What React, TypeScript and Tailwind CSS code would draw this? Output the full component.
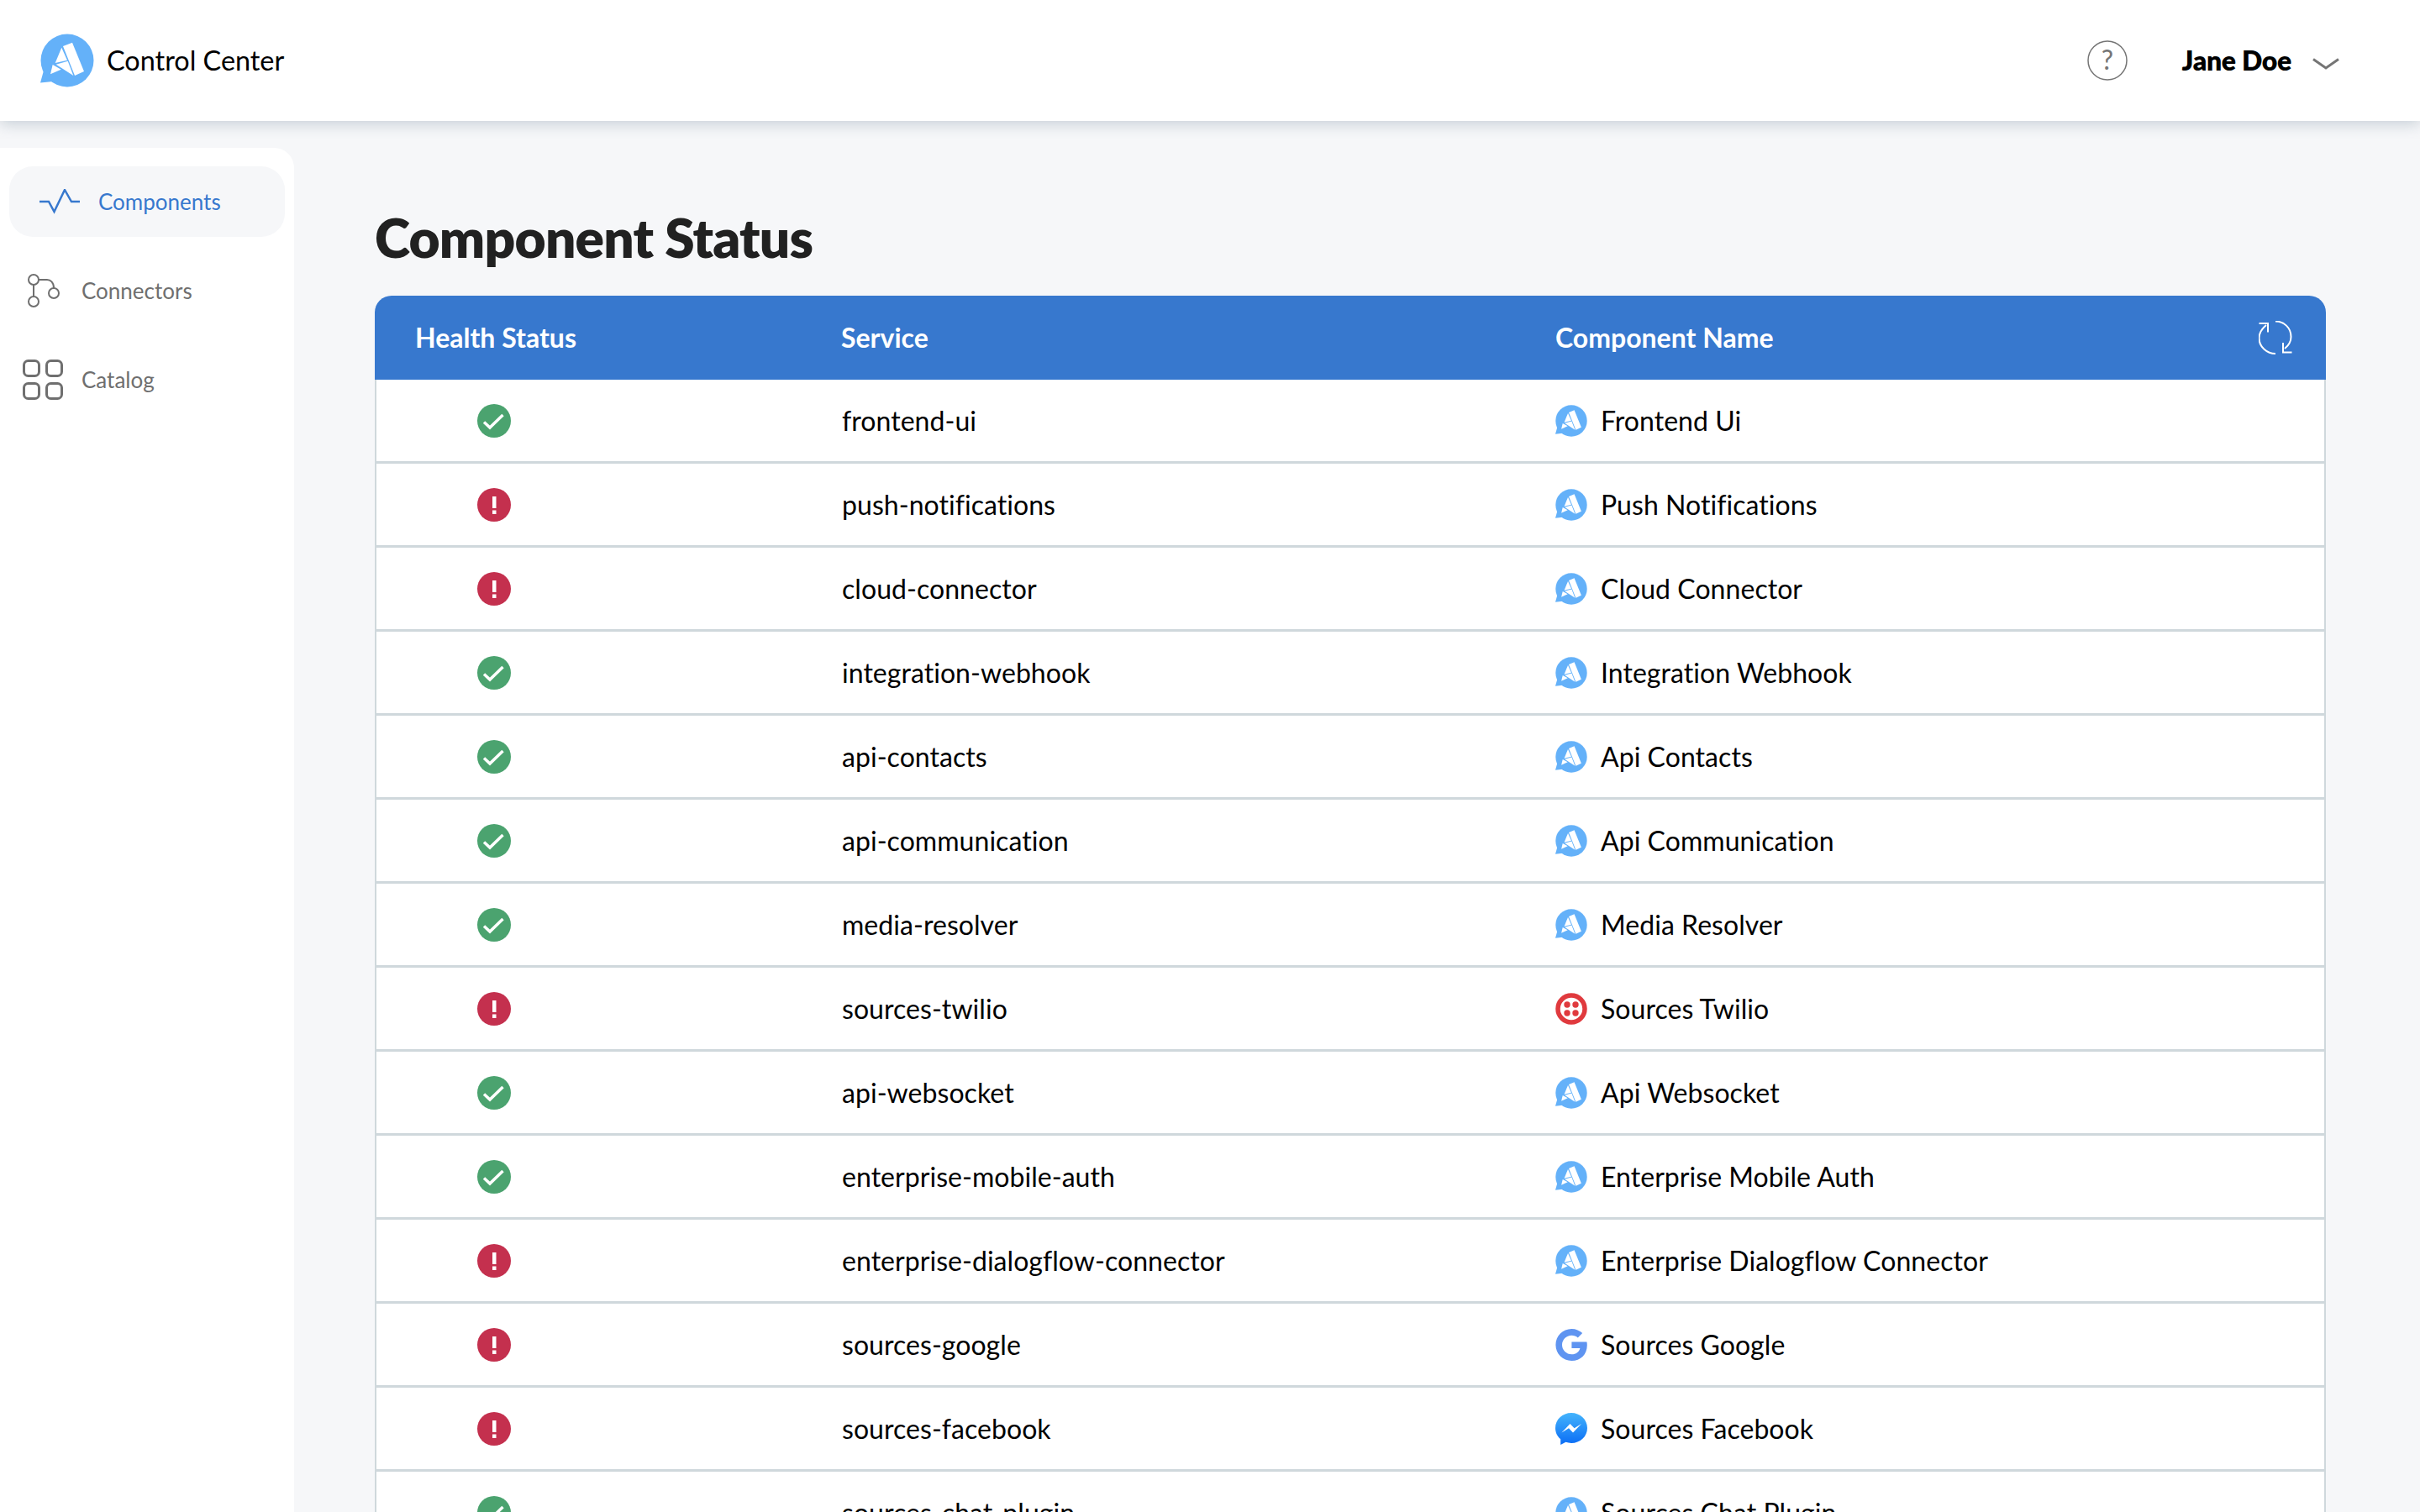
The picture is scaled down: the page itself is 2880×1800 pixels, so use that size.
import { ChevronDown } from "lucide-react";

const rows = [
  { ok: true, service: "frontend-ui", name: "Frontend Ui", icon: "app" },
  { ok: false, service: "push-notifications", name: "Push Notifications", icon: "app" },
  { ok: false, service: "cloud-connector", name: "Cloud Connector", icon: "app" },
  { ok: true, service: "integration-webhook", name: "Integration Webhook", icon: "app" },
  { ok: true, service: "api-contacts", name: "Api Contacts", icon: "app" },
  { ok: true, service: "api-communication", name: "Api Communication", icon: "app" },
  { ok: true, service: "media-resolver", name: "Media Resolver", icon: "app" },
  { ok: false, service: "sources-twilio", name: "Sources Twilio", icon: "twilio" },
  { ok: true, service: "api-websocket", name: "Api Websocket", icon: "app" },
  { ok: true, service: "enterprise-mobile-auth", name: "Enterprise Mobile Auth", icon: "app" },
  { ok: false, service: "enterprise-dialogflow-connector", name: "Enterprise Dialogflow Connector", icon: "app" },
  { ok: false, service: "sources-google", name: "Sources Google", icon: "google" },
  { ok: false, service: "sources-facebook", name: "Sources Facebook", icon: "messenger" },
  { ok: true, service: "sources-chat-plugin", name: "Sources Chat Plugin", icon: "app" },
];

function AppLogo({ className }: { className: string }) {
  return (
    <svg viewBox="0 0 64 64" className={className}>
      <circle cx="32" cy="32" r="31.5" fill="#64b1f9" />
      <path d="M4 44 L0 58.5 L15 57 Z" fill="#64b1f9" />
      <g fill="#fff">
        <path d="M27 15 L38 10.7 L52 45 L41 50 Z" />
        <path d="M25.3 16.7 L32 31.7 L17.7 35 Z" />
        <path d="M18.7 36.7 L32.7 32.7 L39.3 50 Z" />
        <path d="M14.7 37 L24.7 42.7 L12 48.3 Z" />
      </g>
    </svg>
  );
}

function TwilioLogo() {
  return (
    <svg viewBox="0 0 38 38" className="w-[38px] h-[38px]">
      <circle cx="19" cy="19" r="16" fill="none" stroke="#e03a3e" strokeWidth="5.5" />
      <circle cx="14" cy="14" r="3.7" fill="#e03a3e" />
      <circle cx="24" cy="14" r="3.7" fill="#e03a3e" />
      <circle cx="14" cy="24" r="3.7" fill="#e03a3e" />
      <circle cx="24" cy="24" r="3.7" fill="#e03a3e" />
    </svg>
  );
}

function GoogleLogo() {
  return (
    <svg viewBox="0 0 38 38" className="w-[38px] h-[38px]">
      <path
        d="M19.4 15.6 V23 H29.4 C28.4 27.4 24.6 30.3 19.4 30.3 C13.1 30.3 8 25.2 8 19 C8 12.8 13.1 7.7 19.4 7.7 C22.3 7.7 24.8 8.7 26.8 10.5 L32.2 5.1 C28.8 2 24.4 0 19.4 0 C8.9 0 0.4 8.5 0.4 19 C0.4 29.5 8.9 38 19.4 38 C29.9 38 37.8 30.6 37.8 19.2 C37.8 17.9 37.7 16.7 37.4 15.6 Z"
        fill="#5f94f1"
      />
    </svg>
  );
}

function MessengerLogo() {
  return (
    <svg viewBox="0 0 38 38" className="w-[38px] h-[38px]">
      <defs>
        <linearGradient id="fb" x1="0" y1="0" x2="0" y2="1">
          <stop offset="0" stopColor="#44b4fc" />
          <stop offset="1" stopColor="#0a6cf5" />
        </linearGradient>
      </defs>
      <path d="M19 0 C8.5 0 0 7.9 0 18 C0 23.3 2.3 28 6.2 31.2 V38 L12.4 34.8 C14.5 35.5 16.7 36 19 36 C29.5 36 38 28.1 38 18 C38 7.9 29.5 0 19 0 Z" fill="url(#fb)" />
      <path d="M7.5 23.5 L17.5 13 L22.6 18.2 L31 13 L21 23.6 L16 18.3 Z" fill="#fff" />
    </svg>
  );
}

function ComponentIcon({ icon }: { icon: string }) {
  if (icon === "twilio") return <TwilioLogo />;
  if (icon === "google") return <GoogleLogo />;
  if (icon === "messenger") return <MessengerLogo />;
  return <AppLogo className="w-[38px] h-[38px]" />;
}

function StatusIcon({ ok }: { ok: boolean }) {
  if (ok) {
    return (
      <svg viewBox="0 0 40 40" className="w-10 h-10">
        <circle cx="20" cy="20" r="20" fill="#4ba36f" />
        <path d="M8 21.5 L15 28 L30.5 13" fill="none" stroke="#fff" strokeWidth="3.5" />
      </svg>
    );
  }
  return (
    <svg viewBox="0 0 40 40" className="w-10 h-10">
      <circle cx="20" cy="20" r="20" fill="#c4304e" />
      <rect x="18" y="10" width="4.5" height="14" fill="#fff" />
      <rect x="18" y="26.5" width="4.5" height="4.5" fill="#fff" />
    </svg>
  );
}

export default function App() {
  return (
    <div className="h-screen overflow-hidden bg-[#f6f7f9] font-['Lato','Noto_Sans',sans-serif] text-black">
      <header className="relative z-10 h-36 bg-white shadow-[0_4px_16px_rgba(96,120,140,0.3)] flex items-center pl-12 pr-[96px]">
        <AppLogo className="w-16 h-16" />
        <span className="ml-[15px] text-[32.4px]">Control Center</span>
        <div className="ml-auto flex items-center">
          <svg viewBox="0 0 48 48" className="w-12 h-12 text-[#757575]">
            <circle cx="24" cy="24" r="23" fill="none" stroke="currentColor" strokeWidth="1.5" />
            <text x="24" y="35" textAnchor="middle" fontSize="32" fill="currentColor">?</text>
          </svg>
          <span className="ml-[65px] text-[32px] font-extrabold tracking-[-0.3px]">Jane Doe</span>
          <svg viewBox="0 0 32 14" className="ml-[25px] mt-2 w-8 h-[14px] text-[#757575]" fill="none" stroke="currentColor" strokeWidth="3">
            <path d="M1 1.5 L16 12 L31 1.5" />
          </svg>
        </div>
      </header>
      <div className="flex">
        <aside className="mt-8 w-[350px] h-[1700px] shrink-0 bg-white rounded-tr-[24px] pt-[22px] flex flex-col gap-[22px] text-[26px]">
          <a className="mx-[11px] h-[84px] rounded-[28px] bg-[#f6f7f9] pl-9 flex items-center gap-[22px] text-[#3778ce]">
            <svg viewBox="0 0 48 30" className="w-12 h-[30px]" fill="none" stroke="currentColor" strokeWidth="2.5">
              <path d="M0 15 H11 L17.5 27 L30 1 L38 15 H48" />
            </svg>
            Components
          </a>
          <a className="h-[84px] pl-[27px] flex items-center gap-[22px] text-[#6f6f6f]">
            <svg viewBox="0 0 48 42" className="w-12 h-[42px] mt-0.5" fill="none" stroke="currentColor" strokeWidth="2">
              <circle cx="13" cy="7" r="6" />
              <circle cx="37" cy="23" r="6" />
              <circle cx="13" cy="33" r="6" />
              <path d="M13 13 V27 M19 7 H29 C33 7 37 10 37 17" />
            </svg>
            Connectors
          </a>
          <a className="h-[84px] pl-[27px] flex items-center gap-[22px] text-[#6f6f6f]">
            <svg viewBox="0 0 48 48" className="w-12 h-12" fill="none" stroke="currentColor" strokeWidth="3">
              <rect x="1.5" y="1.5" width="18" height="18" rx="5" />
              <rect x="28.5" y="1.5" width="18" height="18" rx="5" />
              <rect x="1.5" y="28.5" width="18" height="18" rx="5" />
              <rect x="28.5" y="28.5" width="18" height="18" rx="5" />
            </svg>
            Catalog
          </a>
        </aside>
        <main className="flex-1 pl-24 pr-28">
          <h1 className="mt-[95px] h-[113px] text-[64px] leading-[88px] font-extrabold tracking-[-0.8px] text-[#212121]">Component Status</h1>
          <div className="h-[100px] rounded-t-[20px] bg-[#3778ce] text-white text-[32px] font-bold grid grid-cols-[555px_850px_1fr] items-center">
            <div className="pl-12">Health Status</div>
            <div>Service</div>
            <div>Component Name</div>
            <svg viewBox="0 0 40 40" className="absolute left-[2688px] w-10 h-10" fill="none" stroke="#fff" strokeWidth="2">
              <path d="M20 0.5 C30 0.5 38.5 8 38.5 19 C38.5 24.5 36 29 31 33 M29 26 V37.5 H39.5" />
              <path d="M20 39 C10 39 0.5 31 0.5 20.5 C0.5 14 3 10 9 5 M0.5 3 H11 V13.5" />
            </svg>
          </div>
          <div className="border-x-2 border-[#cfd8dc] bg-white text-[32px] tracking-[0.05px]">
            {rows.map((row) => (
              <div key={row.service} className="h-[100px] border-b-[3px] border-[#cfd8dc] grid grid-cols-[554px_850px_1fr] items-center">
                <div className="pl-[120px] flex">
                  <StatusIcon ok={row.ok} />
                </div>
                <div>{row.service}</div>
                <div className="flex items-center gap-4 -ml-px">
                  <ComponentIcon icon={row.icon} />
                  {row.name}
                </div>
              </div>
            ))}
          </div>
        </main>
      </div>
    </div>
  );
}
